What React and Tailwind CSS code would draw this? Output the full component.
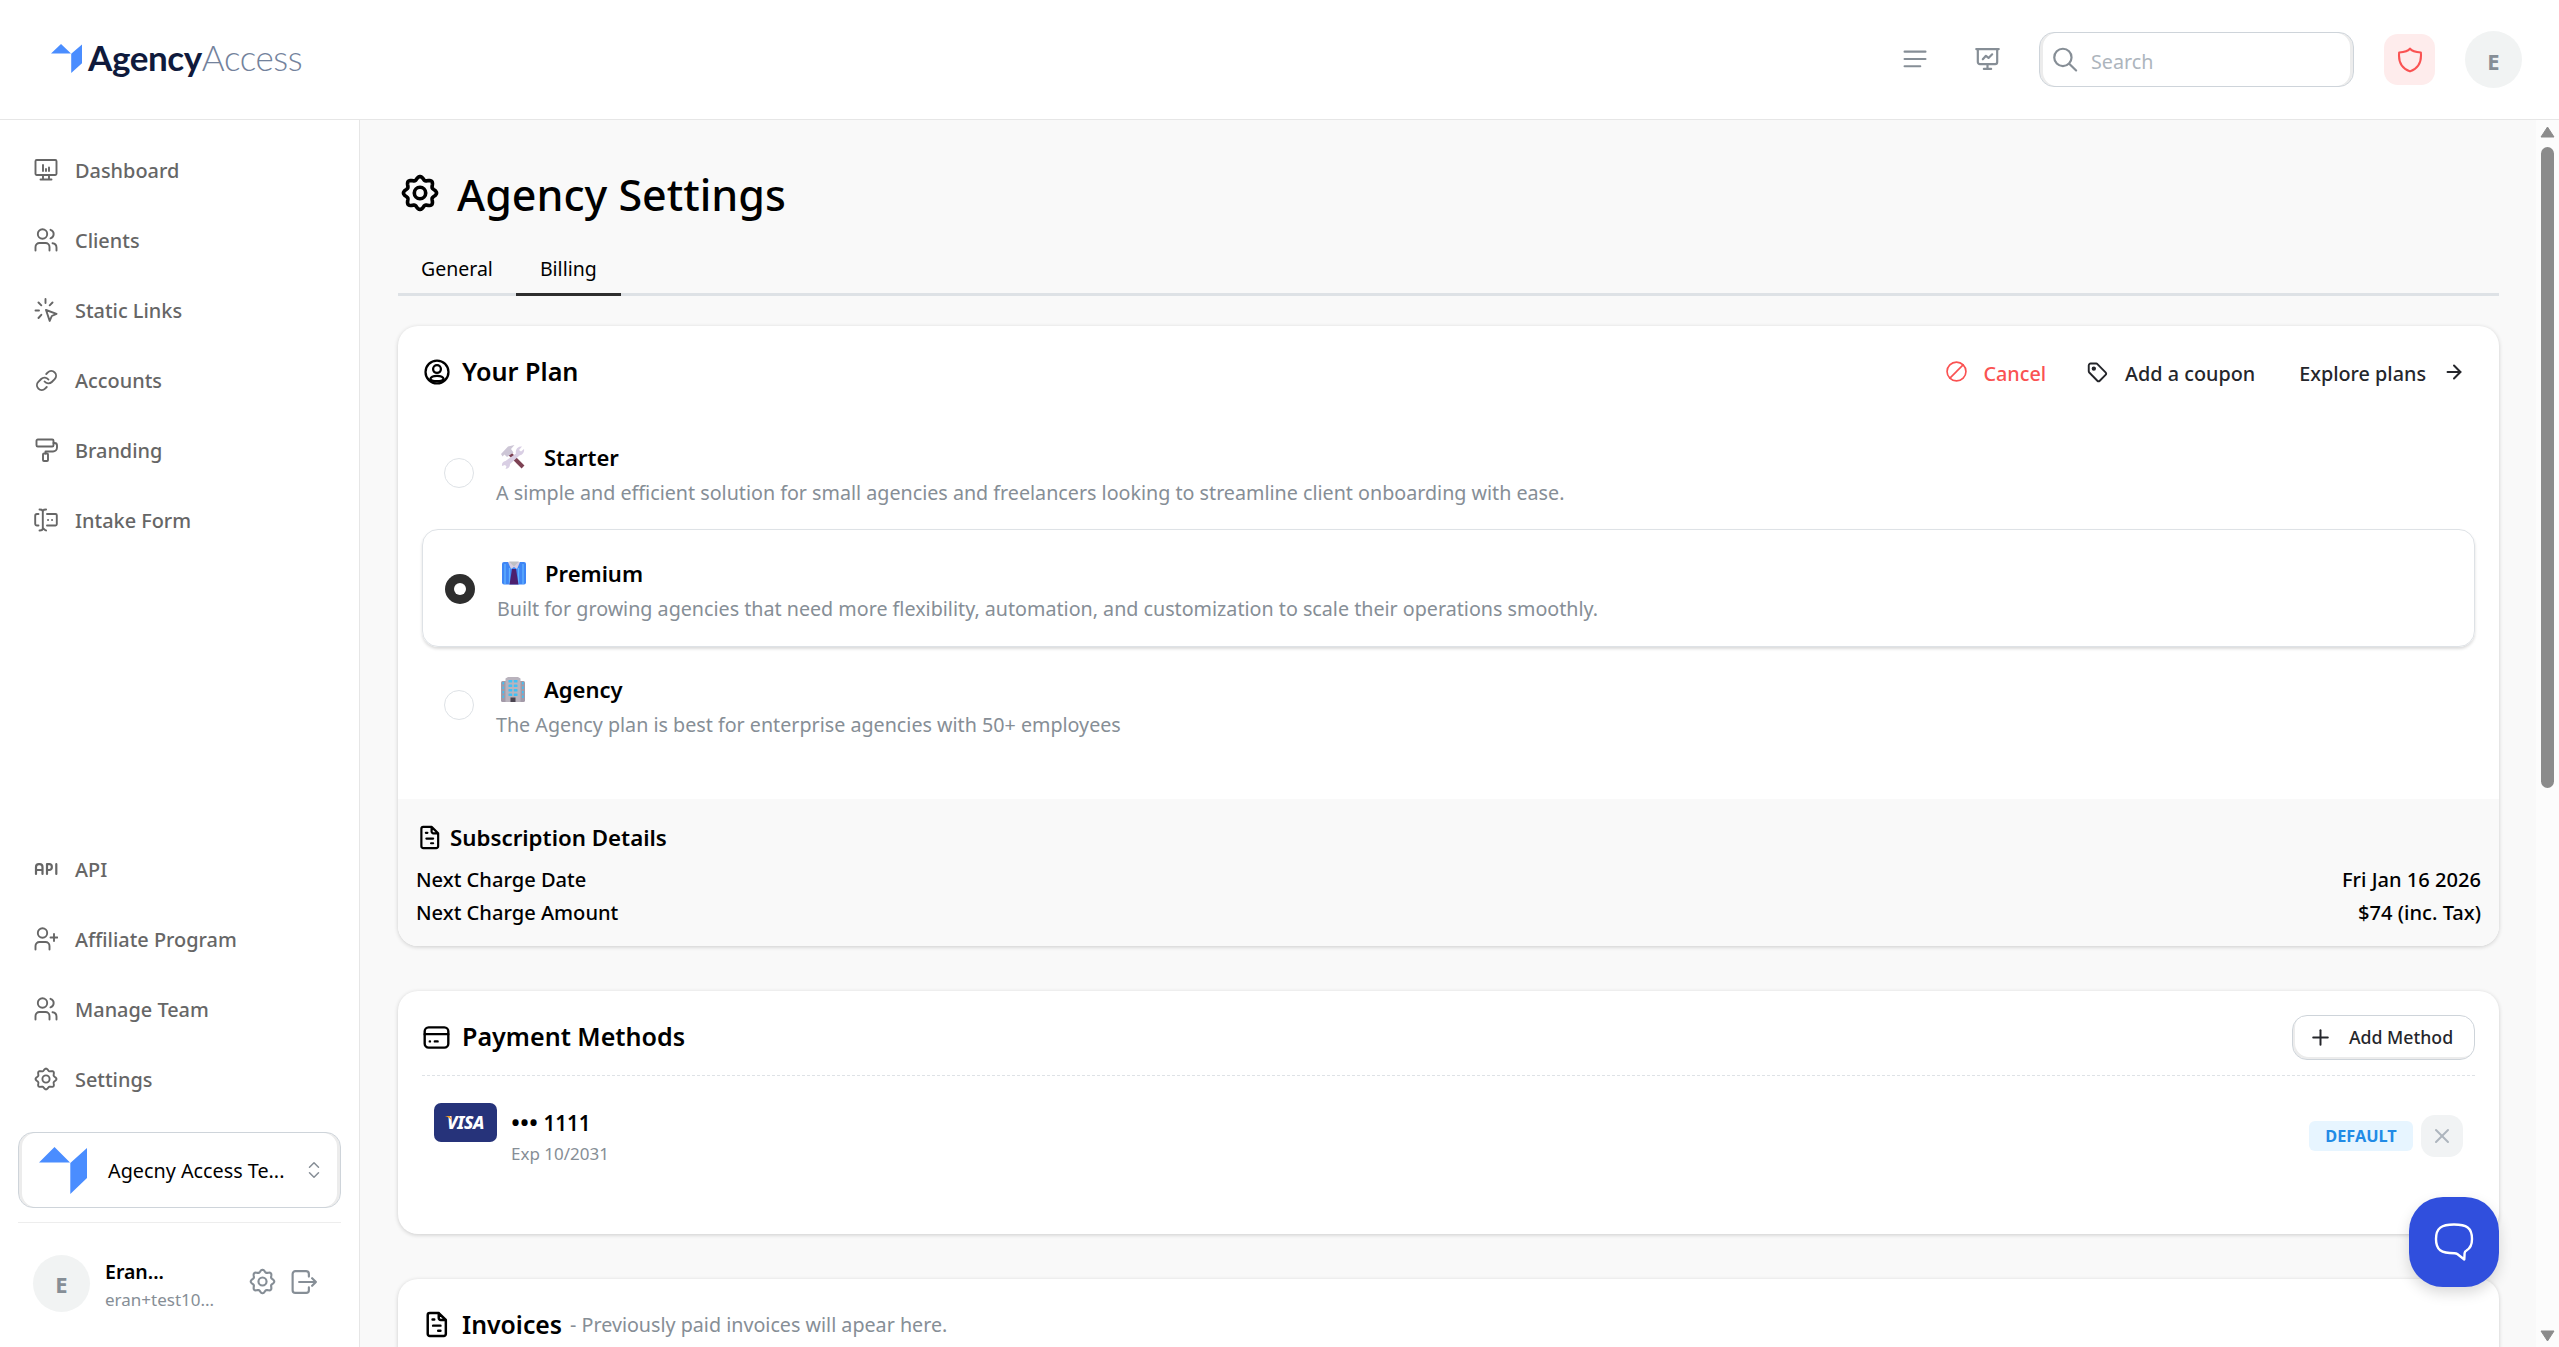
import { ArrowRight, ChevronDown, ChevronUp, Link, Plus, X } from "lucide-react";

// wavy 8-lobed gear outline
const gearPath = (() => {
  const pts = [];
  for (let i = 0; i < 96; i++) {
    const a = (i / 96) * Math.PI * 2 - Math.PI / 2;
    const r = 9.4 + 1.05 * Math.cos(8 * (a + Math.PI / 2));
    pts.push(`${(12 + r * Math.cos(a)).toFixed(2)} ${(12 + r * Math.sin(a)).toFixed(2)}`);
  }
  return `M${pts.join("L")}Z`;
})();

function Svg({ size = 25, sw = 1.6, className = "", children }) {
  return (
    <svg
      width={size}
      height={size}
      viewBox="0 0 24 24"
      fill="none"
      stroke="currentColor"
      strokeWidth={sw}
      strokeLinecap="round"
      strokeLinejoin="round"
      className={`shrink-0 ${className}`}
    >
      {children}
    </svg>
  );
}

const GearIcon = (p) => (
  <Svg {...p}>
    <path d={gearPath} />
    <circle cx="12" cy="12" r="3.6" />
  </Svg>
);

const DashboardIcon = (p) => (
  <Svg {...p}>
    <rect x="1.5" y="2" width="21" height="15" rx="1.2" />
    <path d="M9 17v4M15 17v4M6.5 21.5h11M9 7v6M12 11v2M15 9.5v3.5" />
  </Svg>
);

const UsersIcon = (p) => (
  <Svg {...p}>
    <circle cx="8.5" cy="6" r="4.7" />
    <path d="M1.5 22.5v-3.500a4 4 0 0 1 4-4h6a4 4 0 0 1 4 4v3.500M16.500 1.800a4.500 4.500 0 0 1 0 8.600M18.500 15.200a4.500 4.500 0 0 1 4 4.300v3" />
  </Svg>
);

const UserPlusIcon = (p) => (
  <Svg {...p}>
    <circle cx="8.5" cy="6" r="4.7" />
    <path d="M1.5 22.5v-3.500a4 4 0 0 1 4-4h6a4 4 0 0 1 4 4v3.500M20 7v7M16.500 10.500h7" />
  </Svg>
);

const ClickIcon = (p) => (
  <Svg {...p}>
    <path d="M11.5 1v4M4.5 4.500l2.800 2.800M18.500 4.500l-2.800 2.800M1.500 12.500h3.500M4.500 20l2.800-3.200M12 12l10.500 3.900-4.700 2.100-2.100 4.900z" />
  </Svg>
);

const RollerIcon = (p) => (
  <Svg {...p}>
    <rect x="2.5" y="1.5" width="17" height="7" rx="1.3" />
    <path d="M19.5 5h1a2.500 2.500 0 0 1 2.500 2.500v2a4 4 0 0 1-4 4H11.500v2" />
    <rect x="9" y="15.5" width="5" height="7.5" rx="1" />
  </Svg>
);

const FormIcon = (p) => (
  <Svg {...p}>
    <path d="M4.500 6H3a1.800 1.800 0 0 0-1.800 1.800v7.900A1.800 1.800 0 0 0 3 17.500h1.500M13 6h8.500A1.300 1.300 0 0 1 22.800 7.300v9a1.300 1.300 0 0 1-1.300 1.200H13M14 12h.1M18 12h.1" />
    <path d="M5.500 1.500c2 0 3.300.6 3.300 2v17M12.100 1.500c-2 0-3.300.6-3.300 2M5.500 22.500c2 0 3.300-.6 3.300-2s1.300 2 3.300 2" />
  </Svg>
);

// API mark made of bars
const ApiIcon = ({ size, className }) => (
  <Svg size={size} sw={2.2} className={className}>
    <path d="M2 17v-7a2.800 2.800 0 0 1 2.800-2.800h.9a2.800 2.800 0 0 1 2.800 2.800v7M2 13h6.500" />
    <path d="M13 17V7.200h2.300a2.500 2.500 0 0 1 2.500 2.500v.8a2.500 2.500 0 0 1-2.500 2.500H13M22.300 7.200V17" />
  </Svg>
);

const LogoutIcon = (p) => (
  <Svg {...p}>
    <path d="M16.500 7V4.500a2.500 2.500 0 0 0-2.500-2.500H4A2.500 2.500 0 0 0 1.500 4.500v15A2.500 2.500 0 0 0 4 22h10a2.500 2.500 0 0 0 2.500-2.500V17M7.500 12h15.500M19.500 8.500 23 12l-3.500 3.500" />
  </Svg>
);

const UserCircleIcon = (p) => (
  <Svg {...p}>
    <circle cx="12" cy="12" r="10.6" />
    <circle cx="12" cy="9.3" r="3.6" />
    <path d="M5.800 18.500c.6-2 2.800-2.900 6.200-2.900s5.600.9 6.200 2.900c-.9 1.400-3.200 2-6.200 2s-5.300-.6-6.200-2z" />
  </Svg>
);

const DocIcon = (p) => (
  <Svg {...p}>
    <path d="M14 1.800H6a1.800 1.800 0 0 0-1.800 1.800v16.800a1.800 1.800 0 0 0 1.800 1.800h12.500a1.800 1.800 0 0 0 1.800-1.800V8zM14 1.800v4.500A1.700 1.700 0 0 0 15.700 8h4.600M8.500 7.500h1.500M9 13h6.500M13.500 17.500h2" />
  </Svg>
);

const CardIcon = (p) => (
  <Svg {...p}>
    <rect x="1.500" y="3" width="21" height="18" rx="3.5" />
    <path d="M1.500 9h21M6 15.500h.2M10.500 15.500h2.500" />
  </Svg>
);

const ShieldIcon = (p) => (
  <Svg {...p}>
    <path d="M12 1.500c1.500 2 5 3.200 10 3.500.9 8.700-2.200 14.700-10 17.500C4.200 19.700 1.100 13.700 2 5c5-.3 8.500-1.500 10-3.500z" />
  </Svg>
);

const PresentIcon = (p) => (
  <Svg {...p}>
    <path d="M1.200 2h21.600M2.700 2v12.500a2 2 0 0 0 2 2h14.600a2 2 0 0 0 2-2V2M12 16.500v4M8.500 21h7M7.500 11.800l3-3.300 2.500 2L16.500 7" />
  </Svg>
);

const BanIcon = (p) => (
  <Svg {...p}>
    <circle cx="12" cy="12" r="10.8" />
    <path d="M4.500 19.500l15-15" />
  </Svg>
);

const TagIcon = (p) => (
  <Svg {...p}>
    <path d="M2 4A2.200 2.200 0 0 1 4.200 1.800h6.300a2 2 0 0 1 1.400.6l9.300 9.500a2 2 0 0 1 0 2.800l-6.600 6.700a2 2 0 0 1-2.800 0L2.600 12a2 2 0 0 1-.6-1.400z" />
    <circle cx="7.8" cy="7.5" r="1.4" fill="currentColor" />
  </Svg>
);

const LogoMark = ({ className }) => (
  <svg viewBox="0 0 48 47" className={className} fill="#4a8dff" preserveAspectRatio="none">
    <path d="M0 15.500 15.500 0 31 15.500zM31.300 16 48 1v30L31.300 47z" />
  </svg>
);

function Tools() {
  return (
    <svg width="24" height="24" viewBox="0 0 24 24" className="shrink-0">
      <path d="M8 8 22 22" stroke="#7d4253" strokeWidth="4" />
      <path d="M0 9 7 1.500 13.500 0 10 4l2.500 3.500L6 12 3.500 9.500 1.500 11.500z" fill="#cdc6d6" />
      <path
        d="M21 1.500a5.500 5.500 0 0 0-6 7L4.500 16A4.500 4.500 0 0 0 1 21l3-1 1.500 1.500L4.500 24a4.500 4.500 0 0 0 4.500-5l9.500-8.500a5.500 5.500 0 0 0 4.500-6.500l-3 2.500-2-1.500z"
        fill="#d9cfe4"
      />
    </svg>
  );
}

function Shirt() {
  return (
    <svg width="24" height="24" viewBox="0 0 24 24" className="shrink-0">
      <rect x="0" y="1" width="24" height="22.5" rx="2" fill="#3f86f5" />
      <path d="M3 3v20M7.500 7v16M16.500 7v16M21 3v20" stroke="#62b2ff" strokeWidth="1.3" />
      <path d="M10 8h4l2.500 15.500h-9z" fill="#4c1f6e" />
      <path d="M6 1h12l-3 7-3-2-3 2z" fill="#d7cde0" />
      <path d="M7 .5h10l-5 5z" fill="#bfc0c4" />
    </svg>
  );
}

function Building() {
  return (
    <svg width="24" height="25" viewBox="0 0 24 25" className="shrink-0">
      <rect x="0" y="4" width="24" height="21" rx="1.5" fill="#a39aa8" />
      <path d="M4.500 25V1.500L7 0h10l2.500 1.500V25z" fill="#b9b3bd" />
      <g fill="#3fc1f5">
        {[3, 7.5, 12, 16.5].map((y) => (
          <g key={y}>
            <rect x="7.5" y={y} width="3.7" height="2.6" rx=".6" />
            <rect x="12.8" y={y} width="3.7" height="2.6" rx=".6" />
            <rect x="1.5" y={y + 2} width="1.6" height="2.4" />
            <rect x="21" y={y + 2} width="1.6" height="2.4" />
          </g>
        ))}
      </g>
      <rect x="9.5" y="20.5" width="5" height="4.5" fill="#4a4450" />
    </svg>
  );
}

const mainNav = [
  { label: "Dashboard", icon: DashboardIcon },
  { label: "Clients", icon: UsersIcon },
  { label: "Static Links", icon: ClickIcon },
  { label: "Accounts", icon: Link },
  { label: "Branding", icon: RollerIcon },
  { label: "Intake Form", icon: FormIcon },
];

const bottomNav = [
  { label: "API", icon: ApiIcon },
  { label: "Affiliate Program", icon: UserPlusIcon },
  { label: "Manage Team", icon: UsersIcon },
  { label: "Settings", icon: GearIcon },
];

const plans = [
  {
    name: "Starter",
    icon: Tools,
    desc: "A simple and efficient solution for small agencies and freelancers looking to streamline client onboarding with ease.",
  },
  {
    name: "Premium",
    icon: Shirt,
    desc: "Built for growing agencies that need more flexibility, automation, and customization to scale their operations smoothly.",
    selected: true,
  },
  {
    name: "Agency",
    icon: Building,
    desc: "The Agency plan is best for enterprise agencies with 50+ employees",
  },
];

function NavList({ items }) {
  return (
    <ul className="text-[#666]">
      {items.map(({ label, icon: Icon }) => (
        <li key={label} className="flex h-[70px] items-center gap-4 pl-[34px]">
          <span className="flex w-[24px] justify-center">
            {Icon === Link ? <Link size={23} strokeWidth={2} /> : <Icon size={24} sw={1.9} />}
          </span>
          <span className="ml-px pt-[2px] text-[19.9px] font-medium">{label}</span>
        </li>
      ))}
    </ul>
  );
}

function Header() {
  return (
    <header className="flex h-[120px] shrink-0 items-center border-b border-[#e6e6e6] bg-white pr-[37px] pl-[51px]">
      <div className="mb-[3px] flex items-center">
        <LogoMark className="h-[29px] w-[31px]" />
        <div className="mb-[3px] ml-[6px] font-[Lato] text-[35px] leading-[38px] tracking-[-0.4px]">
          <span className="font-bold text-[#0f1a3c]">Agency</span>
          <span className="font-light text-[#73829c]">Access</span>
        </div>
      </div>
      <div className="ml-auto flex items-center text-[#868e96]">
        <Svg size={25} sw={2.1}>
          <path d="M2.500 4.500h20M2.500 11.500h20M2.500 18.500h15" />
        </Svg>
        <PresentIcon size={25} sw={2.1} className="ml-12" />
        <div className="ml-[39px] flex h-[55px] w-[315px] items-center rounded-[15px] border border-[#ced4da] pl-[13px] shadow-[inset_3px_0_0_#ececec,inset_-3px_0_0_#ececec]">
          <Svg size={25} sw={2.1}>
            <circle cx="9.5" cy="10" r="8.3" />
            <path d="M15.800 16.300 22.200 22.500" />
          </Svg>
          <span className="ml-[13px] pt-[4px] text-[19.7px] text-[#adb5bd]">Search</span>
        </div>
        <div className="ml-[30px] flex size-[51px] items-center justify-center rounded-[14px] bg-[#feecec] text-[#fa5252]">
          <ShieldIcon size={26} sw={1.9} />
        </div>
        <div className="ml-[30px] flex size-[57px] items-center justify-center rounded-full bg-[#f1f3f3] pt-[3px] text-[22px] font-bold">
          E
        </div>
      </div>
    </header>
  );
}

function Sidebar() {
  return (
    <aside className="flex w-[360px] shrink-0 flex-col border-r border-[#e6e6e6] bg-white pt-[15px]">
      <NavList items={mainNav} />
      <div className="mt-auto">
        <NavList items={bottomNav} />
      </div>
      <div className="mx-[18px] mt-[18px] flex h-[76px] shrink-0 items-center rounded-[15px] border border-[#ced4da] pr-[17px] pl-[20px] shadow-[inset_3px_0_0_#ececec,inset_-3px_0_0_#ececec]">
        <LogoMark className="h-[47px] w-[48px]" />
        <span className="ml-[21px] pt-[2px] text-[19.8px] whitespace-nowrap">Agecny Access Te...</span>
        <span className="ml-auto flex flex-col text-[#868e96]">
          <ChevronUp size={18} strokeWidth={2} className="-mb-[8px]" />
          <ChevronDown size={18} strokeWidth={2} />
        </span>
      </div>
      <div className="mx-[18px] mt-[14px] border-t border-[#ededed]" />
      <div className="flex h-[124px] shrink-0 items-center pl-[33px]">
        <div className="mb-1 flex size-[57px] items-center justify-center rounded-full bg-[#f1f3f3] pt-[3px] text-[22px] font-bold text-[#868e96]">
          E
        </div>
        <div className="mb-px ml-[15px] w-[144px]">
          <div className="text-[19.5px] leading-[30px] font-semibold">Eran...</div>
          <div className="text-[17px] leading-[26px] text-[#868e96]">eran+test10...</div>
        </div>
        <GearIcon size={27} sw={1.9} className="mb-[7px] text-[#868e96]" />
        <LogoutIcon size={26} sw={2} className="mb-[7px] ml-[15px] text-[#868e96]" />
      </div>
    </aside>
  );
}

function PlanOption({ plan }) {
  const Icon = plan.icon;
  return (
    <div
      className={
        plan.selected
          ? "flex h-[118px] items-center rounded-[16px] border border-[#dee2e6] pl-[22px] shadow-[0_2px_3px_rgba(0,0,0,0.14)]"
          : "flex h-[114px] items-center pl-[22px]"
      }
    >
      {plan.selected ? (
        <span className="mt-px flex size-[30px] items-center justify-center rounded-full bg-[#2e2e2e]">
          <span className="size-3 rounded-full bg-white" />
        </span>
      ) : (
        <span className="mt-px size-[30px] rounded-full border border-[#dee2e6]" />
      )}
      <div className="mt-[5px] ml-[22px]">
        <div className="flex items-center gap-[19px] pl-[5px]">
          <Icon />
          <span className="text-[22px] leading-[35px] font-semibold">{plan.name}</span>
        </div>
        <p className="text-[19.72px] leading-[35px] text-[#868e96]">{plan.desc}</p>
      </div>
    </div>
  );
}

const cardClass = "rounded-[20px] bg-white shadow-[0_1px_4px_rgba(0,0,0,0.18)]";

function PlanCard() {
  return (
    <section className={`mt-[30px] flex h-[620px] shrink-0 flex-col overflow-hidden ${cardClass}`}>
      <div className="flex h-[89px] items-center pr-[34px] pl-[26px]">
        <UserCircleIcon size={26} sw={2.1} className="mt-[2px]" />
        <h2 className="ml-[12px] pt-[2px] text-[25.2px] font-semibold">Your Plan</h2>
        <div className="ml-auto flex items-center pt-[6px] text-[19.8px] font-medium text-[#25262b]">
          <BanIcon size={21} sw={1.9} className="mb-[4px] text-[#fa5252]" />
          <span className="ml-[16px] text-[#fa5252]">Cancel</span>
          <TagIcon size={21} sw={2.2} className="mb-[3px] ml-[41px]" />
          <span className="ml-[17px]">Add a coupon</span>
          <span className="ml-[44px]">Explore plans</span>
          <ArrowRight size={22} strokeWidth={2.2} className="mb-[3px] ml-[17px]" />
        </div>
      </div>
      <div className="px-[24px]">
        {plans.map((p) => (
          <PlanOption key={p.name} plan={p} />
        ))}
      </div>
      <div className="mt-auto h-[147px] bg-[#f9f9f9] px-[18px] pt-[18px]">
        <div className="flex items-center gap-[8px] pl-px">
          <DocIcon size={25} sw={2.1} />
          <h3 className="pt-px text-[22.3px] leading-[40px] font-semibold">Subscription Details</h3>
        </div>
        <div className="mt-[5px] flex justify-between text-[20.1px] leading-[33px] font-medium">
          <span>Next Charge Date</span>
          <span>Fri Jan 16 2026</span>
        </div>
        <div className="flex justify-between text-[20.1px] leading-[33px] font-medium">
          <span>Next Charge Amount</span>
          <span>$74 (inc. Tax)</span>
        </div>
      </div>
    </section>
  );
}

function PaymentCard() {
  return (
    <section className={`mt-[45px] h-[243px] shrink-0 px-[24px] ${cardClass}`}>
      <div className="flex h-[85px] items-center border-b border-dashed border-[#dee2e6] pt-[8px]">
        <CardIcon size={27} sw={2.1} className="ml-px" />
        <h2 className="ml-[12px] text-[25.1px] font-semibold">Payment Methods</h2>
        <button className="ml-auto flex h-[45px] w-[183px] items-center rounded-[15px] border border-[#ced4da] pl-[15px] text-[17.7px] font-medium text-[#25262b] shadow-[inset_2px_-2px_0_#ececec]">
          <Plus size={25} strokeWidth={1.9} />
          <span className="ml-[16px]">Add Method</span>
        </button>
      </div>
      <div className="flex h-[120px] items-center pr-[12px] pl-[12px]">
        <div className="relative mb-[28px] flex h-[39px] w-[63px] items-center justify-center rounded-[7px] bg-[#26337a] text-[17.5px] font-extrabold tracking-[-0.3px] text-white italic">
          VISA
          <svg width="7" height="5" viewBox="0 0 7 5" className="absolute top-[13px] left-[11px]">
            <path d="M0 0h5l2 5C5.500 2.500 3 1 0 0z" fill="#f0a028" />
          </svg>
        </div>
        <div className="mt-[3px] ml-[14px] flex flex-col">
          <span className="text-[20.6px] leading-[32px] font-semibold">
            <span className="text-[24px] leading-none">•••</span> 1111
          </span>
          <span className="text-[17px] leading-[30px] text-[#868e96]">Exp 10/2031</span>
        </div>
        <span className="ml-auto flex h-[30px] w-[104px] items-center justify-center rounded-[6px] bg-[#e7f5ff] text-[16.3px] font-bold text-[#228be6]">
          DEFAULT
        </span>
        <span className="ml-[8px] flex size-[42px] items-center justify-center rounded-[14px] bg-[#f1f3f4] text-[#adb5bd]">
          <X size={24} strokeWidth={2} />
        </span>
      </div>
    </section>
  );
}

function InvoicesCard() {
  return (
    <section className={`mt-[45px] h-[243px] shrink-0 px-[24px] ${cardClass}`}>
      <div className="flex h-[85px] items-center pt-[6px]">
        <DocIcon size={27} sw={2.2} className="ml-px" />
        <h2 className="ml-[12px] text-[24.8px] font-semibold">Invoices</h2>
        <span className="ml-[8px] pt-px text-[19.7px] text-[#868e96]">- Previously paid invoices will apear here.</span>
      </div>
    </section>
  );
}

export default function App() {
  return (
    <div className="relative flex h-screen flex-col overflow-hidden bg-white font-['Noto_Sans',sans-serif] text-black">
      <Header />
      <div className="flex min-h-0 flex-1">
        <Sidebar />
        <main className="flex flex-1 flex-col overflow-hidden bg-[#f9f9f9] pr-[37px] pl-[38px]">
          <div className="mt-[42px] flex h-[66px] shrink-0 items-center">
            <GearIcon size={38} sw={2.3} className="mb-[4px] ml-[3px]" />
            <h1 className="ml-[18px] text-[43px] font-medium">Agency Settings</h1>
          </div>
          <div className="mt-[17px] flex h-[51px] shrink-0 border-b-[3px] border-[#dee2e6] text-[19.5px]">
            <span className="h-[51px] px-[23px] pt-[9px]">General</span>
            <span className="h-[51px] border-b-[3px] border-[#2e2e2e] px-[24px] pt-[9px]">Billing</span>
          </div>
          <PlanCard />
          <PaymentCard />
          <InvoicesCard />
        </main>
        {/* scrollbar */}
        <div className="flex w-[23px] flex-col items-center bg-[#fcfcfc] pt-[6px] pb-[5px]">
          <svg width="15" height="12" viewBox="0 0 15 12">
            <path d="M7.500 1 14 11H1z" fill="#8b8b8b" stroke="#8b8b8b" strokeLinejoin="round" />
          </svg>
          <div className="mt-[9px] h-[641px] w-[13px] rounded-full bg-[#8b8b8b]" />
          <svg width="15" height="12" viewBox="0 0 15 12" className="mt-auto">
            <path d="M7.500 11 14 1H1z" fill="#8b8b8b" stroke="#8b8b8b" strokeLinejoin="round" />
          </svg>
        </div>
      </div>
      {/* chat launcher */}
      <button className="absolute right-[60px] bottom-[60px] flex size-[90px] items-center justify-center rounded-[34px] bg-[#304fdd] text-white shadow-[0_6px_14px_rgba(0,0,0,0.15)]">
        <svg width="40" height="40" viewBox="0 0 40 40" fill="none" stroke="currentColor" strokeWidth="2.4" strokeLinejoin="round">
          <path d="M20 2.500c12.500 0 18 3 18 14.500 0 6-2 9.500-5.500 11.500-1.300.7-1.800 1.300-1.900 2.600l-.3 6.400-7-5.500c-.8-.6-1.500-.8-2.800-.8C7 31.200 2 28 2 17S7.500 2.500 20 2.500z" />
        </svg>
      </button>
    </div>
  );
}
